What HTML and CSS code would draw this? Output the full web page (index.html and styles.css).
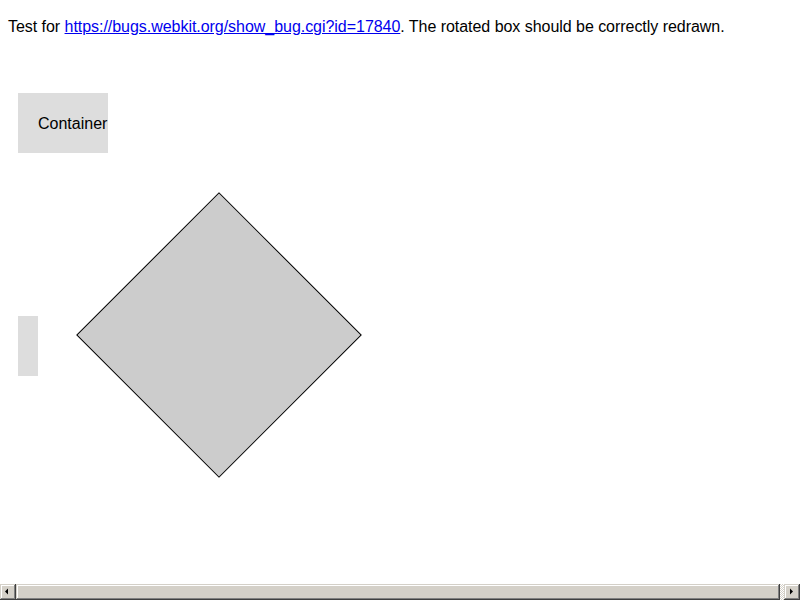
FILE: index.html
```html
<!DOCTYPE html>
<html>
<head>
<meta charset="utf-8">
<link rel="stylesheet" href="styles.css">
</head>
<body>
<div class="page">
  <p class="intro">Test for <a href="https://bugs.webkit.org/show_bug.cgi?id=17840">https://bugs.webkit.org/show_bug.cgi?id=17840</a>. The rotated box should be correctly redrawn.</p>
  <div class="container">Container</div>
  <div class="stage">
    <div class="stub"></div>
    <div class="rotated"></div>
  </div>
</div>
<div class="hscroll">
  <div class="sb-btn"><svg width="16" height="16" viewBox="0 0 16 16"><path d="M5 7.5 L8 4.5 L8 10.5 Z" fill="#000"/></svg></div>
  <div class="sb-thumb"></div>
  <div class="sb-track"></div>
  <div class="sb-btn"><svg width="16" height="16" viewBox="0 0 16 16"><path d="M6 4.5 L9 7.5 L6 10.5 Z" fill="#000"/></svg></div>
</div>
</body>
</html>
```
FILE: styles.css
```css
html, body {
  margin: 0;
  padding: 0;
  background: #fff;
  overflow: hidden;
}
body {
  font-family: "Liberation Sans", Arial, sans-serif;
  font-size: 16px;
  color: #000;
  width: 800px;
  height: 600px;
}
.page {
  box-sizing: border-box;
  height: 584px;
  padding: 17px 8px 0;
  overflow: hidden;
}
.intro {
  margin: 0;
  line-height: 19px;
  white-space: nowrap;
  letter-spacing: -0.04px;
}
.intro a {
  color: #0000ee;
  text-decoration: underline;
}
.container {
  margin: 57px 0 0 10px;
  width: 50px;
  height: 20px;
  padding: 21px 20px 19px;
  background: #ddd;
  line-height: 19px;
  white-space: nowrap;
}
.stage {
  display: flex;
  align-items: flex-start;
  margin: 81px 0 0 10px;
}
.stub {
  width: 20px;
  height: 60px;
  margin-top: 82px;
  background: #ddd;
}
.rotated {
  width: 200px;
  height: 200px;
  margin-left: 80px;
  background: #ccc;
  border: 1px solid #000;
  transform: rotate(45deg);
}
.hscroll {
  display: flex;
  height: 16px;
  background: #d4d0c8;
}
.sb-btn, .sb-thumb {
  box-sizing: border-box;
  height: 16px;
  background: #d4d0c8;
  box-shadow: inset -1px -1px #404040, inset 1px 1px #d4d0c8, inset -2px -2px #808080, inset 2px 2px #fff;
}
.sb-btn {
  width: 16px;
  flex: none;
}
.sb-btn svg {
  display: block;
}
.sb-thumb {
  flex: 1;
}
.sb-track {
  width: 4px;
  flex: none;
  background: repeating-conic-gradient(#fff 0 25%, #d4d0c8 0 50%) 0 0 / 2px 2px;
}
```
